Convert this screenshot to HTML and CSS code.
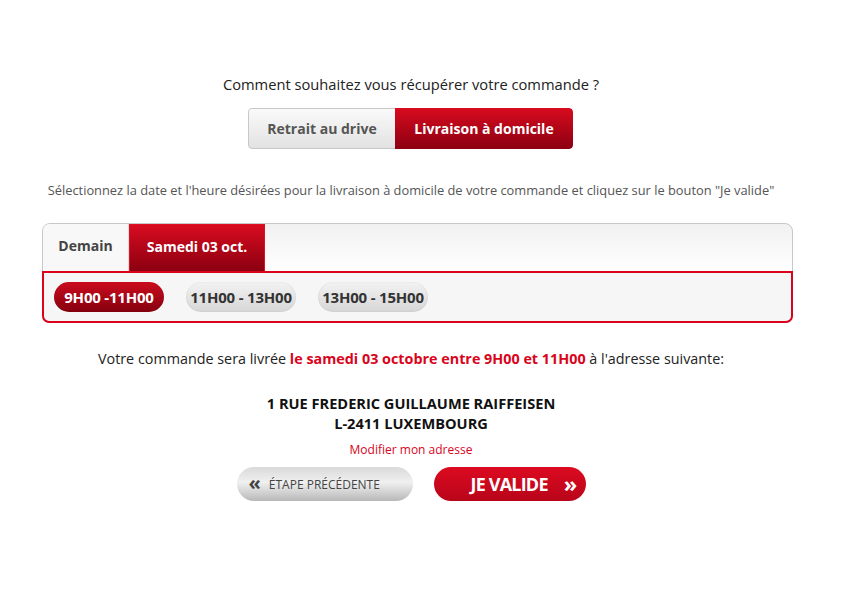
FILE: index.html
```html
<!DOCTYPE html>
<html lang="fr">
<head>
<meta charset="utf-8">
<link rel="stylesheet" href="styles.css">
</head>
<body>
<div class="page">
  <p class="question">Comment souhaitez vous récupérer votre commande ?</p>
  <div class="toggle">
    <span class="opt opt-off">Retrait au drive</span>
    <span class="opt opt-on">Livraison à domicile</span>
  </div>
  <p class="hint">Sélectionnez la date et l'heure désirées pour la livraison à domicile de votre commande et cliquez sur le bouton "Je valide"</p>
  <div class="panel">
    <div class="tabs">
      <span class="tab">Demain</span>
      <span class="tab tab-on">Samedi 03 oct.</span>
    </div>
    <div class="slots">
      <span class="slot slot-on">9H00 -11H00</span>
      <span class="slot">11H00 - 13H00</span>
      <span class="slot">13H00 - 15H00</span>
    </div>
  </div>
  <p class="summary">Votre commande sera livrée <strong class="red">le samedi 03 octobre entre 9H00 et 11H00</strong> à l'adresse suivante:</p>
  <p class="address">1 RUE FREDERIC GUILLAUME RAIFFEISEN<br>L-2411 LUXEMBOURG</p>
  <p class="modify">Modifier mon adresse</p>
  <div class="actions">
    <span class="btn btn-back"><span class="chev">«</span>ÉTAPE PRÉCÉDENTE</span>
    <span class="btn btn-go">JE VALIDE<span class="chev">»</span></span>
  </div>
</div>
</body>
</html>
```
FILE: styles.css
```css
* { box-sizing: border-box; }
html, body { margin: 0; padding: 0; background: #fff; }
body { font-family: "Open Sans", "Noto Sans", sans-serif; color: #222; }
.page { width: 822px; padding-top: 74px; display: flex; flex-direction: column; align-items: center; }
p { margin: 0; }
.question { font-size: 14.7px; line-height: 20px; color: #222; }
.toggle { margin-top: 14px; display: flex; height: 41px; border-radius: 4px; overflow: hidden; margin-left: -1px; }
.opt { display: flex; align-items: center; justify-content: center; font-size: 14px; font-weight: 700; }
.opt-off { width: 147px; color: #555; background: linear-gradient(#fafafa, #e2e2e2); border: 1px solid #c8c8c8; border-right: 0; border-radius: 4px 0 0 4px; }
.opt-on { width: 178px; color: #fff; background: linear-gradient(#d80b1f, #8b0011); border-radius: 0 4px 4px 0; }
.hint { margin-top: 32px; font-size: 12.85px; line-height: 18px; color: #555; }
.panel { margin-top: 24px; margin-left: 13px; width: 751px; border: 1px solid #c8c8c8; border-radius: 8px; background: linear-gradient(#f1f1f1, #fff 48px); }
.tabs { display: flex; height: 47px; }
.tab { display: flex; align-items: center; justify-content: center; font-size: 14px; font-weight: 700; color: #444; width: 86px; padding-bottom: 4px; border-right: 1px solid #ddd; background: #f8f8f8; border-radius: 7px 0 0 0; }
.tab-on { width: 136px; color: #fff; background: linear-gradient(#d80b1f, #8b0011); border: 1px solid #e01020; border-bottom: 0; border-radius: 0; }
.slots { margin: 0 -1px -1px; height: 52px; border: 2px solid #d9041c; border-radius: 0 0 7px 7px; background: #f6f6f6; display: flex; align-items: center; gap: 22px; padding-left: 10px; }
.slot { width: 110px; height: 30px; border-radius: 15px; display: flex; align-items: center; justify-content: center; font-size: 15px; font-weight: 700; color: #333; background: linear-gradient(#f3f3f3, #d6d6d6); box-shadow: inset 0 0 2px rgba(0,0,0,.1); letter-spacing: -0.2px; }
.slot-on { color: #fff; background: linear-gradient(#cc0c1e, #85000f); }
.summary { margin-top: 26px; font-size: 14.35px; line-height: 20px; color: #222; }
.red { color: #d9041c; }
.address { margin-top: 24px; font-size: 14.6px; line-height: 20px; font-weight: 700; text-align: center; color: #111; }
.modify { margin-top: 9px; font-size: 12px; line-height: 16px; color: #d9041c; }
.actions { margin-top: 9px; display: flex; gap: 21px; }
.btn { height: 34px; border-radius: 17px; display: flex; align-items: center; font-weight: 700; }
.btn-back { width: 176px; padding-left: 12px; font-size: 12px; font-weight: 400; color: #444; background: linear-gradient(#d9d9d9, #f0f0f0 45%, #b8b8b8); }
.btn-back .chev { font-size: 20px; font-weight: 700; margin-right: 8px; line-height: 1; color: #444; margin-top: -3px; }
.btn-go { width: 152px; padding-left: 37px; font-size: 18px; letter-spacing: -0.8px; color: #fff; background: linear-gradient(#dc0a20, #b8051a); }
.btn-go .chev { font-size: 22px; margin-left: 16px; line-height: 1; letter-spacing: 0; margin-top: -3px; }
```
